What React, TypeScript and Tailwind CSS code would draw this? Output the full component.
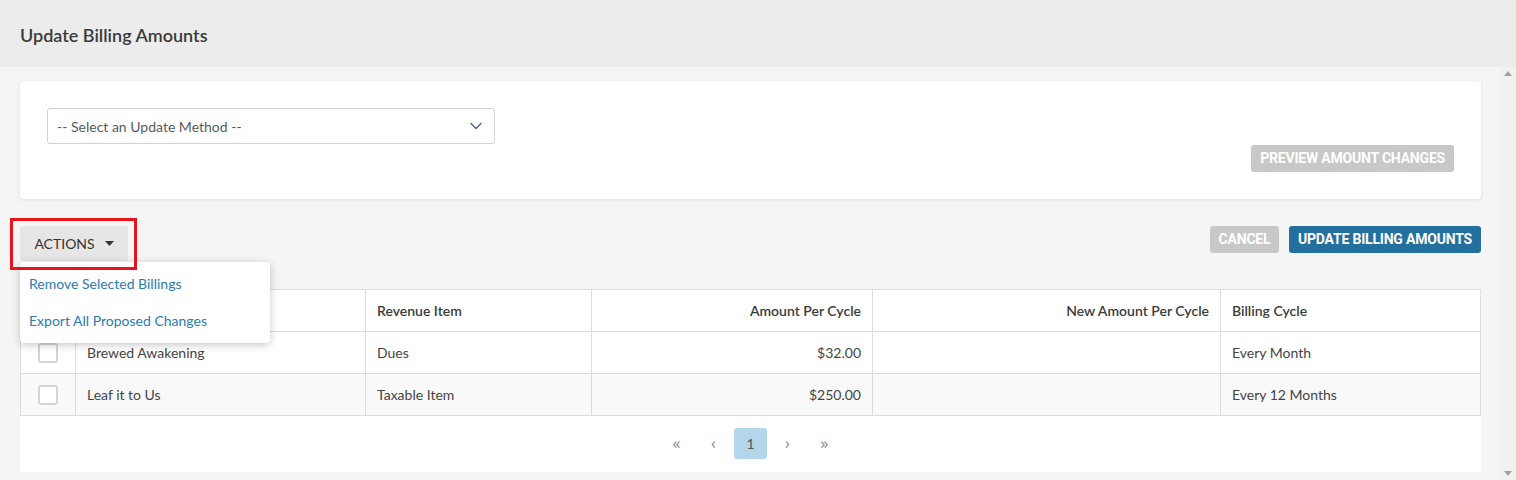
import React from "react"

const rows = [
  { name: "Brewed Awakening", item: "Dues", amount: "$32.00", cycle: "Every Month" },
  { name: "Leaf it to Us", item: "Taxable Item", amount: "$250.00", cycle: "Every 12 Months" },
]

function Chevron() {
  return (
    <svg width="12" height="8" viewBox="0 0 12 8" fill="none">
      <path d="M1 1.5l5 5 5-5" stroke="#5b6f86" strokeWidth="1.6" strokeLinecap="round" strokeLinejoin="round" />
    </svg>
  )
}

export default function App() {
  return (
    <div className="w-[1516px] h-[480px] overflow-hidden bg-[#f5f5f5] font-['Lato','Open_Sans',sans-serif] text-[14px] text-[#3b3b3b]">
      {/* Header */}
      <div className="h-[67px] bg-[#ececec] flex items-center px-5 pt-[3px]">
        <h1 className="text-[18px] font-semibold text-[#3a3a3a]">Update Billing Amounts</h1>
      </div>

      <div className="flex h-[413px]">
        <div className="flex-1 pl-5 pr-[19px] pt-[14px]">
          {/* Update method card */}
          <div className="bg-white rounded-[4px] shadow-[0_1px_4px_rgba(0,0,0,0.08)] p-[27px] flex flex-col">
            <div className="w-[448px] h-[36px] border border-[#cfd3d8] rounded-[3px] flex items-center justify-between pl-[9px] pr-[12px]">
              <span className="text-[#555b61]">-- Select an Update Method --</span>
              <Chevron />
            </div>
            <div className="flex justify-end mt-[1px]">
              <button className="h-[27px] px-[9px] rounded-[3px] bg-[#c8c8c8] text-white font-['Roboto',sans-serif] font-bold text-[14px] tracking-[-0.2px]">
                PREVIEW AMOUNT CHANGES
              </button>
            </div>
          </div>

          {/* Actions row */}
          <div className="relative mt-[27px] flex items-start justify-between">
            <button className="h-[35px] w-[108px] rounded-[3px] bg-[#e6e6e6] flex items-center justify-center gap-[10px] text-[#333]">
              <span>ACTIONS</span>
              <svg width="9" height="5" viewBox="0 0 9 5"><path d="M0 0h9L4.5 5z" fill="#333" /></svg>
            </button>
            <div className="flex gap-[10px]">
              <button className="h-[27px] w-[69px] rounded-[3px] bg-[#c8c8c8] text-white font-['Roboto',sans-serif] font-bold text-[14px] tracking-[-0.2px]">
                CANCEL
              </button>
              <button className="h-[27px] w-[192px] rounded-[3px] bg-[#23709e] text-white font-['Roboto',sans-serif] font-bold text-[14px] tracking-[-0.2px]">
                UPDATE BILLING AMOUNTS
              </button>
            </div>

            {/* Dropdown menu */}
            <div className="absolute left-0 top-[36px] w-[250px] h-[81px] bg-white rounded-[4px] shadow-[0_2px_8px_rgba(0,0,0,0.22)] z-10 flex flex-col pt-[3px] text-[#2b7bb0]">
              <div className="h-[37px] flex items-center px-[9px]">Remove Selected Billings</div>
              <div className="h-[37px] flex items-center px-[9px]">Export All Proposed Changes</div>
            </div>

            {/* Highlight box */}
            <div className="absolute left-[-10px] top-[-8px] w-[127px] h-[52px] border-[3px] border-[#e8141c] z-20" />
          </div>

          {/* Table */}
          <div className="mt-[28px] bg-white">
            <table className="w-full border-collapse table-fixed">
              <colgroup>
                <col className="w-[55px]" />
                <col className="w-[290px]" />
                <col className="w-[226px]" />
                <col className="w-[281px]" />
                <col className="w-[348px]" />
                <col />
              </colgroup>
              <thead>
                <tr className="h-[42px] bg-white">
                  <th className="border border-[#dcdcdc]" />
                  <th className="border border-[#dcdcdc] px-[11px] text-left font-semibold" />
                  <th className="border border-[#dcdcdc] px-[11px] text-left font-semibold text-[#3b3b3b]">Revenue Item</th>
                  <th className="border border-[#dcdcdc] px-[11px] text-right font-semibold text-[#3b3b3b]">Amount Per Cycle</th>
                  <th className="border border-[#dcdcdc] px-[11px] text-right font-semibold text-[#3b3b3b]">New Amount Per Cycle</th>
                  <th className="border border-[#dcdcdc] px-[11px] text-left font-semibold text-[#3b3b3b]">Billing Cycle</th>
                </tr>
              </thead>
              <tbody>
                {rows.map((r, i) => (
                  <tr key={r.name} className={i % 2 === 1 ? "h-[42px] bg-[#f9f9f9]" : "h-[42px] bg-white"}>
                    <td className="border border-[#dcdcdc]">
                      <div className="mx-auto w-[20px] h-[20px] rounded-[3px] border-2 border-[#d2d4d6] bg-white" />
                    </td>
                    <td className="border border-[#dcdcdc] px-[11px] text-[#444]">{r.name}</td>
                    <td className="border border-[#dcdcdc] px-[11px] text-[#444]">{r.item}</td>
                    <td className="border border-[#dcdcdc] px-[11px] text-right text-[#444]">{r.amount}</td>
                    <td className="border border-[#dcdcdc] px-[11px]" />
                    <td className="border border-[#dcdcdc] px-[11px] text-[#444]">{r.cycle}</td>
                  </tr>
                ))}
              </tbody>
            </table>

            {/* Pagination */}
            <div className="h-[56px] flex items-start justify-center pt-[12px] gap-[4px] text-[#888] font-['Open_Sans',sans-serif]">
              <span className="w-[33px] h-[31px] flex items-center justify-center text-[16px] pb-[2px]">«</span>
              <span className="w-[33px] h-[31px] flex items-center justify-center text-[16px] pb-[2px]">‹</span>
              <span className="w-[33px] h-[31px] flex items-center justify-center rounded-[3px] bg-[#b3d6ea] text-[#555] font-['Lato',sans-serif] text-[14px]">1</span>
              <span className="w-[33px] h-[31px] flex items-center justify-center text-[16px] pb-[2px]">›</span>
              <span className="w-[33px] h-[31px] flex items-center justify-center text-[16px] pb-[2px]">»</span>
            </div>
          </div>
        </div>

        {/* Scrollbar */}
        <div className="w-[16px] bg-[#f1f1f1] flex flex-col items-center justify-between py-[4px]">
          <svg width="8" height="5" viewBox="0 0 8 5"><path d="M0 5L4 0l4 5z" fill="#a3a3a3" /></svg>
          <svg width="8" height="5" viewBox="0 0 8 5"><path d="M0 0h8L4 5z" fill="#a3a3a3" /></svg>
        </div>
      </div>
    </div>
  )
}
